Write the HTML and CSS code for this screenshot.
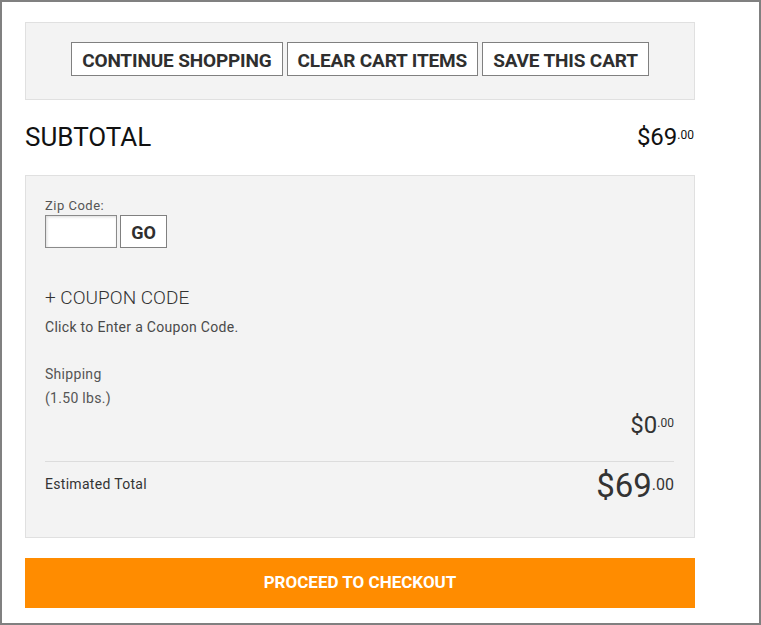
FILE: index.html
```html
<!DOCTYPE html>
<html>
<head>
<meta charset="utf-8">
<link rel="stylesheet" href="styles.css">
</head>
<body>
<div class="frame">
  <div class="cart">
    <div class="actions">
      <button class="btn">CONTINUE SHOPPING</button>
      <button class="btn">CLEAR CART ITEMS</button>
      <button class="btn">SAVE THIS CART</button>
    </div>
    <div class="subtotal-row">
      <div class="subtotal-label">SUBTOTAL</div>
      <div class="price price-md"><span class="dollars">$69</span><span class="cents">.00</span></div>
    </div>
    <div class="summary">
      <div class="zip-label">Zip Code:</div>
      <div class="zip-row">
        <input class="zip-input" type="text">
        <button class="btn btn-go">GO</button>
      </div>
      <div class="coupon-title">+ COUPON CODE</div>
      <div class="coupon-hint">Click to Enter a Coupon Code.</div>
      <div class="ship-label">Shipping</div>
      <div class="ship-weight">(1.50 lbs.)</div>
      <div class="ship-price">
        <div class="price price-md"><span class="dollars">$0</span><span class="cents">.00</span></div>
      </div>
      <div class="total-row">
        <div class="total-label">Estimated Total</div>
        <div class="price price-lg"><span class="dollars">$69</span><span class="cents">.00</span></div>
      </div>
    </div>
    <button class="checkout">PROCEED TO CHECKOUT</button>
  </div>
</div>
</body>
</html>
```
FILE: styles.css
```css
* { box-sizing: border-box; }
html, body { margin: 0; padding: 0; background: #fff; }
body { font-family: Roboto, "Liberation Sans", sans-serif; color: #333; }

.frame {
  width: 761px;
  height: 625px;
  border: 2px solid #808080;
  padding: 20px 64px 0 23px;
}
.cart { width: 670px; display: flex; flex-direction: column; }

.actions {
  background: #f3f3f3;
  border: 1px solid #e0e0e0;
  padding: 19px 0 23px 0;
  display: flex;
  justify-content: center;
  gap: 4px;
}
.btn {
  display: inline-flex;
  align-items: center;
  justify-content: center;
  height: 34px;
  padding: 3px 10px 0 10px;
  background: #fff;
  border: 1px solid #808080;
  border-radius: 0;
  font-family: Roboto, "Liberation Sans", sans-serif;
  font-weight: 700;
  font-size: 19px;
  letter-spacing: -0.15px;
  color: #2f2f2f;
  line-height: 28px;
  margin: 0;
  cursor: pointer;
}
.btn-wide { padding: 3px 11px 0 11px; }

.subtotal-row {
  height: 75px;
  padding-top: 22px;
  display: flex;
  justify-content: space-between;
  align-items: flex-start;
}
.subtotal-label { font-size: 26px; line-height: 30px; color: #111; }

.price { display: flex; align-items: flex-start; }
.price-md { color: #111; }
.price-md .dollars { font-size: 24px; line-height: 24px; }
.price-md .cents { font-size: 12px; line-height: 12px; margin-top: 4px; }
.subtotal-row .price { margin-top: 3px; margin-right: 1px; }

.summary {
  background: #f3f3f3;
  border: 1px solid #e0e0e0;
  height: 363px;
  padding: 0 20px 0 19px;
  display: flex;
  flex-direction: column;
}
.zip-label { margin-top: 22px; font-size: 13px; line-height: 16px; letter-spacing: 0.5px; color: #555; }
.zip-row { margin-top: 1px; display: flex; gap: 3px; }
.zip-input {
  width: 72px; height: 33px; margin: 0;
  border: 1px solid #8a8a8a;
  background: #fff;
  box-shadow: inset 1px 1px 3px rgba(0,0,0,0.15);
}
.btn-go { height: 33px; width: 47px; padding: 2px 0 0; font-size: 18px; letter-spacing: 0; }

.coupon-title { margin-top: 39px; font-size: 19px; font-weight: 300; line-height: 22px; color: #333; }
.coupon-hint { margin-top: 10px; font-size: 14px; line-height: 16px; letter-spacing: 0.3px; color: #4a4a4a; }
.ship-label { margin-top: 27px; font-size: 14px; line-height: 24px; letter-spacing: 0.3px; color: #555; }
.ship-weight { font-size: 14px; line-height: 24px; letter-spacing: 0.3px; color: #555; }
.ship-price { display: flex; justify-content: flex-end; margin-top: 3px; }
.ship-price .price { color: #333; }

.total-row {
  margin-top: 24px;
  border-top: 1px solid #dcdcdc;
  padding-top: 7px;
  display: flex;
  justify-content: space-between;
  align-items: flex-start;
}
.total-label { margin-top: 7px; font-size: 14px; line-height: 16px; letter-spacing: 0.3px; color: #333; }
.price-lg { color: #333; }
.price-lg .dollars { font-size: 33px; line-height: 33px; }
.price-lg .cents { font-size: 16px; line-height: 16px; margin-top: 8px; }

.checkout {
  margin-top: 20px;
  height: 50px;
  width: 670px;
  border: 0;
  background: #ff8c00;
  color: #fff;
  font-family: Roboto, "Liberation Sans", sans-serif;
  font-weight: 700;
  font-size: 17px;
  padding: 0 0 3px;
  cursor: pointer;
}
```
